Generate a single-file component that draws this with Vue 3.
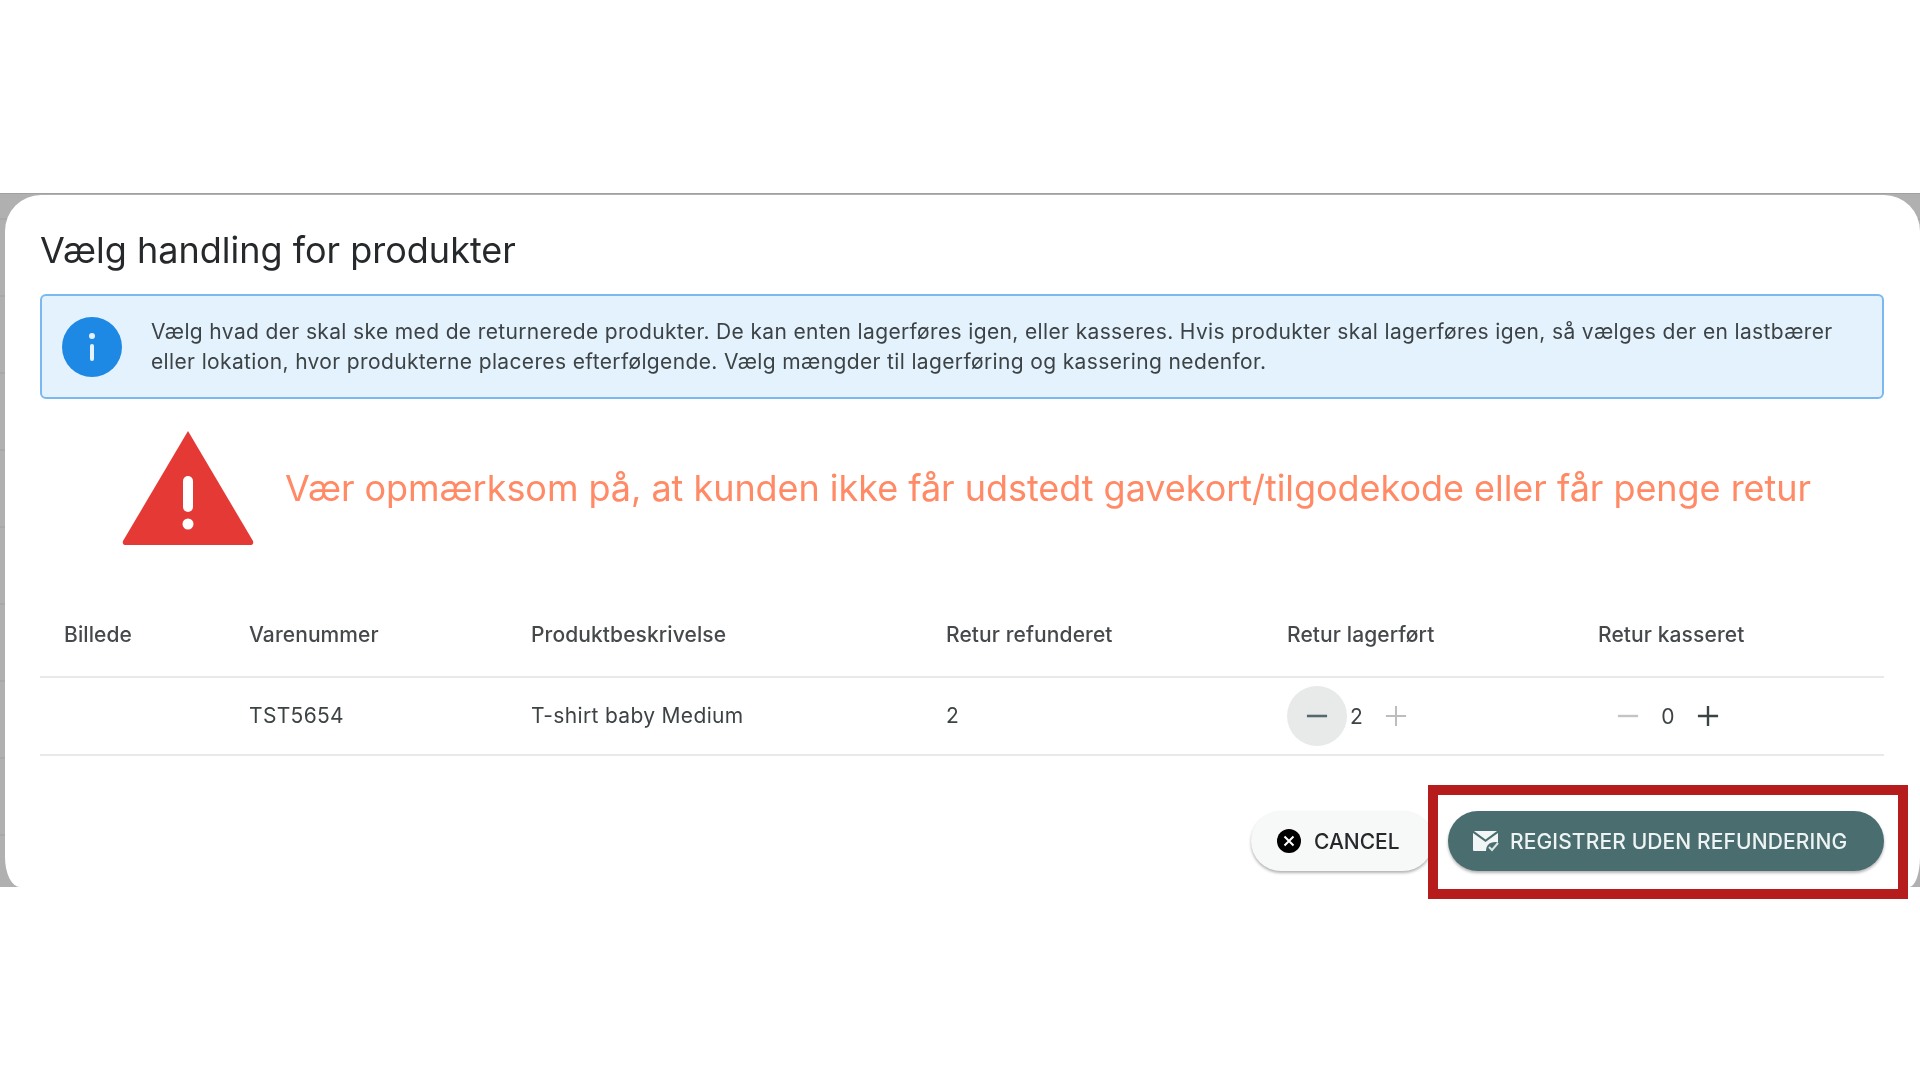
<script setup>
const columns = ['Billede', 'Varenummer', 'Produktbeskrivelse', 'Retur refunderet', 'Retur lagerført', 'Retur kasseret']
</script>

<template>
  <div class="stage">
    <div class="backdrop">
      <div class="modal">
        <h2 class="title">Vælg handling for produkter</h2>

        <div class="info">
          <svg class="info-icon" viewBox="0 0 60 60">
            <circle cx="30" cy="30" r="30" fill="#1e88e5" />
            <circle cx="30" cy="19" r="3" fill="#e3f2fd" />
            <rect x="28" y="27" width="4" height="17" rx="2" fill="#e3f2fd" />
          </svg>
          <p class="info-text">
            Vælg hvad der skal ske med de returnerede produkter. De kan enten lagerføres igen, eller kasseres. Hvis produkter skal lagerføres igen, så vælges der en lastbærer<br />
            eller lokation, hvor produkterne placeres efterfølgende. Vælg mængder til lagerføring og kassering nedenfor.
          </p>
        </div>

        <div class="warning">
          <svg class="warning-icon" viewBox="0 0 132 116">
            <path d="M66 1 L131 111 Q132 115 128 115 L4 115 Q0 115 1 111 Z" fill="#e53935" />
            <rect x="61" y="46" width="10" height="36" rx="5" fill="#fff" />
            <circle cx="66" cy="94" r="5.5" fill="#fff" />
          </svg>
          <span class="warning-text">Vær opmærksom på, at kunden ikke får udstedt gavekort/tilgodekode eller får penge retur</span>
        </div>

        <div class="table">
          <div class="row head">
            <div v-for="c in columns" :key="c" class="cell">{{ c }}</div>
          </div>
          <div class="row body">
            <div class="cell"></div>
            <div class="cell">TST5654</div>
            <div class="cell">T-shirt baby Medium</div>
            <div class="cell">2</div>
            <div class="cell stepper">
              <span class="step-btn hover">
                <svg viewBox="0 0 24 24"><path d="M1 12h22" stroke="#56696a" stroke-width="2.8" /></svg>
              </span>
              <span class="qty first">2</span>
              <span class="step-btn">
                <svg viewBox="0 0 24 24"><path d="M1 12h22M12 1v22" stroke="#bdbdbd" stroke-width="2.2" /></svg>
              </span>
            </div>
            <div class="cell stepper">
              <span class="step-btn">
                <svg viewBox="0 0 24 24"><path d="M1 12h22" stroke="#c4c4c4" stroke-width="2.6" /></svg>
              </span>
              <span class="qty second">0</span>
              <span class="step-btn">
                <svg viewBox="0 0 24 24"><path d="M1 12h22M12 1v22" stroke="#3a4445" stroke-width="2.6" /></svg>
              </span>
            </div>
          </div>
        </div>

        <div class="actions">
          <button class="btn cancel">
            <svg class="btn-icon" viewBox="0 0 24 24">
              <circle cx="12" cy="12" r="12" fill="#000" />
              <path d="M7.5 7.5l9 9M16.5 7.5l-9 9" stroke="#fff" stroke-width="2" />
            </svg>
            CANCEL
          </button>
          <button class="btn primary">
            <svg class="btn-icon mail" viewBox="0 0 26 22">
              <path d="M1 1h23L12.5 9.5Z" fill="#f1f5f5" />
              <path d="M0 3v17q0 1 1 1h12q0-7 6-8.5q3-.8 6 0V3L12.5 12Z" fill="#f1f5f5" />
              <path d="M16 17l3 3l6-7" fill="none" stroke="#dbe5e5" stroke-width="2" />
            </svg>
            REGISTRER UDEN REFUNDERING
          </button>
        </div>
      </div>
    </div>
    <div class="highlight"></div>
  </div>
</template>

<style>
html, body {
  margin: 0;
  background: #fff;
}
</style>

<style scoped>
.stage {
  position: relative;
  width: 1920px;
  height: 1080px;
  padding-top: 193px;
  box-sizing: border-box;
  background: #fff;
  overflow: hidden;
  font-family: Inter, 'Liberation Sans', sans-serif;
}

.backdrop {
  height: 694px;
  box-sizing: border-box;
  padding: 1px 0 0 5px;
  background: repeating-linear-gradient(180deg, #b0b0b0 0, #b0b0b0 75px, #a8a8a8 75px, #a8a8a8 77px);
  background-position: 0 -51px;
  border-top: 1px solid #a0a0a0;
}

.modal {
  height: 100%;
  box-sizing: border-box;
  padding: 33px 36px 0 35px;
  background: #fff;
  border-radius: 36px 36px 11px 15px / 36px 36px 30px 30px;
  filter: blur(0.6px);
}

.title {
  margin: 0;
  height: 66px;
  font-size: 36px;
  line-height: 44px;
  font-weight: 400;
  color: #26292b;
}

.info {
  display: flex;
  align-items: center;
  height: 105px;
  box-sizing: border-box;
  padding: 0 20px 0 20px;
  background: #e3f2fd;
  border: 2px solid #7ab8ef;
  border-radius: 6px;
}

.info-icon {
  width: 60px;
  height: 60px;
  flex: none;
  margin-right: 29px;
}

.info-text {
  margin: 0;
  font-size: 21px;
  line-height: 30px;
  letter-spacing: 0.36px;
  color: #3d4345;
  white-space: nowrap;
}

.warning {
  display: flex;
  align-items: center;
  height: 180px;
  margin-bottom: 15px;
  padding-left: 82px;
}

.warning-icon {
  width: 132px;
  height: 116px;
  flex: none;
  margin-right: 31px;
  margin-top: -3px;
}

.warning-text {
  font-size: 36px;
  line-height: 48px;
  letter-spacing: -0.04px;
  color: #ff8a65;
  white-space: nowrap;
  margin-top: -3px;
}

.table {
  font-size: 21px;
  letter-spacing: 0.33px;
  color: #3d4345;
}

.row {
  display: grid;
  grid-template-columns: 185px 282px 415px 341px 311px 310px;
  align-items: center;
  border-bottom: 2px solid #e9e9e9;
}

.head {
  height: 82px;
  font-weight: 500;
  letter-spacing: 0.1px;
  color: #45494b;
}

.body {
  height: 76px;
}

.cell {
  padding-left: 24px;
  padding-bottom: 2px;
}

.stepper {
  display: flex;
  align-items: center;
  padding-bottom: 0;
}

.step-btn {
  width: 60px;
  height: 60px;
  flex: none;
  display: flex;
  align-items: center;
  justify-content: center;
  border-radius: 50%;
}

.step-btn.hover {
  background: #e8eaea;
}

.step-btn svg {
  width: 22px;
  height: 22px;
}

.qty {
  text-align: center;
  flex: none;
}

.qty.first {
  width: 19px;
}

.qty.second {
  width: 20px;
}

.actions {
  display: flex;
  justify-content: flex-end;
  gap: 15px;
  margin-top: 55px;
}

.btn {
  display: flex;
  align-items: center;
  height: 60px;
  border: none;
  border-radius: 30px;
  font-family: inherit;
  font-size: 21px;
  font-weight: 500;
  white-space: nowrap;
  box-shadow: 0 2px 3px rgba(0, 0, 0, 0.3);
}

.cancel {
  width: 182px;
  padding: 0 0 0 26px;
  background: #f7f8f8;
  color: #26292b;
}

.primary {
  width: 436px;
  padding: 0 0 0 25px;
  background: #4a6d6f;
  color: #eef3f3;
  letter-spacing: 0.12px;
}

.btn-icon {
  width: 24px;
  height: 24px;
  margin-right: 13px;
  flex: none;
}

.btn-icon.mail {
  width: 26px;
  height: 22px;
  margin-right: 11px;
}

.highlight {
  position: absolute;
  left: 1428px;
  top: 785px;
  width: 480px;
  height: 114px;
  box-sizing: border-box;
  border: 10px solid #b71c1c;
}
</style>
